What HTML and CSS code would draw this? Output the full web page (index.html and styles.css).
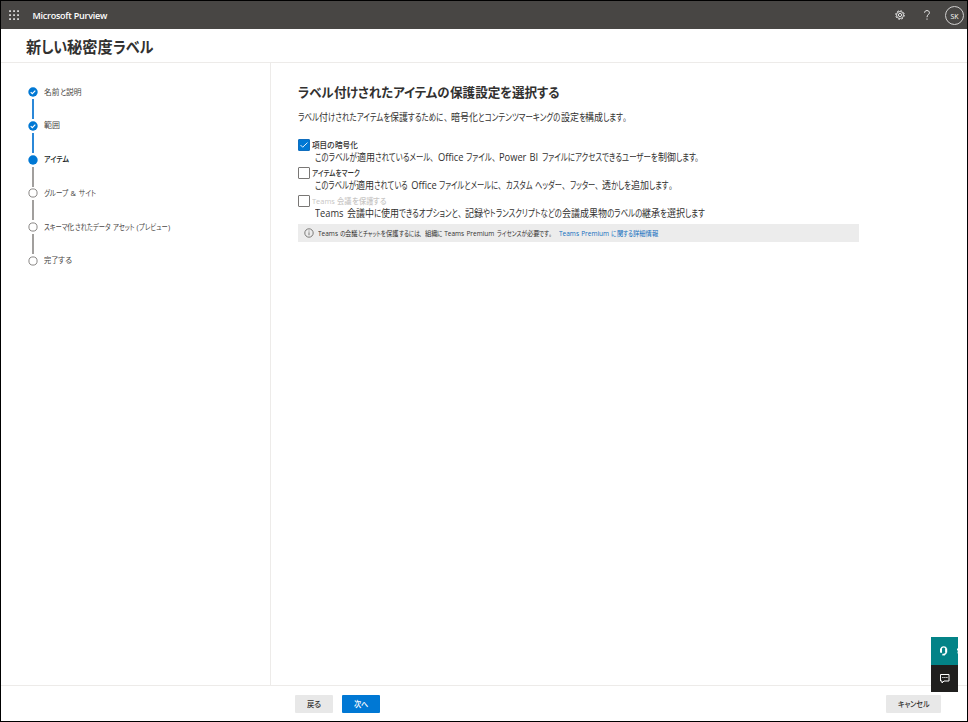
FILE: index.html
```html
<!DOCTYPE html>
<html lang="ja">
<head>
<meta charset="utf-8">
<title>Microsoft Purview</title>
<link rel="stylesheet" href="styles.css">
</head>
<body>
<div class="app">
  <header class="topbar">
    <svg class="waffle" width="10" height="10" viewBox="0 0 10 10" fill="#e4e4e4"><path d="M.2.2h1.700v1.700H.2zM4.200.2h1.700v1.700H4.200zM8.200.2h1.700v1.700H8.200zM.2 4.200h1.700v1.700H.2zM4.200 4.200h1.700v1.700H4.200zM8.200 4.200h1.700v1.700H8.200zM.2 8.200h1.700v1.700H.2zM4.200 8.200h1.700v1.700H4.200zM8.200 8.200h1.700v1.700H8.200z"/></svg>
    <span class="brand">Microsoft Purview</span>
    <svg class="gear" width="10" height="10" viewBox="0 0 10 10" fill="none" stroke="#e8e8e8"><circle cx="5" cy="5" r="3.500" stroke-width=".9"/><circle cx="5" cy="5" r="1.600" stroke-width="1"/><circle cx="5" cy="5" r="4.300" stroke-width="1" stroke-dasharray="1.690 1.690"/></svg>
    <svg class="help" width="6" height="10" viewBox="0 0 6 10" fill="none" stroke="#eee"><path d="M.6 2.700C.6 1.300 1.600.6 3 .6s2.400.8 2.400 2.100C5.400 4.500 3 4.600 3 7.200"/><path d="M3 8.500v1.200"/></svg>
    <span class="avatar">SK</span>
  </header>
  <div class="titlebar"><h1 data-fit="127.5" data-kanji="0.98">新しい秘密度ラベル</h1></div>
  <div class="body">
    <nav class="steps">
      <div class="step done"><svg class="dot" viewBox="0 0 10 10"><circle cx="5" cy="5" r="4.700" fill="#0078d4"/><path d="M2.700 5.200l1.600 1.500 3-3.100" fill="none" stroke="#fff" stroke-width="1.100"/></svg><span data-fit="37.5" data-kanji="0.97">名前と説明</span></div>
      <div class="step done"><svg class="dot" viewBox="0 0 10 10"><circle cx="5" cy="5" r="4.700" fill="#0078d4"/><path d="M2.700 5.200l1.600 1.500 3-3.100" fill="none" stroke="#fff" stroke-width="1.100"/></svg><span>範囲</span></div>
      <div class="step current"><svg class="dot" viewBox="0 0 10 10"><circle cx="5" cy="5" r="4.700" fill="#0078d4"/></svg><span data-fit="25">アイテム</span></div>
      <div class="step"><svg class="dot" viewBox="0 0 10 10"><circle cx="5" cy="5" r="4.100" fill="#fff" stroke="#8a8886"/></svg><span data-fit="51.5">グループ &amp; サイト</span></div>
      <div class="step"><svg class="dot" viewBox="0 0 10 10"><circle cx="5" cy="5" r="4.100" fill="#fff" stroke="#8a8886"/></svg><span data-fit="126">スキーマ化されたデータ アセット (プレビュー)</span></div>
      <div class="step"><svg class="dot" viewBox="0 0 10 10"><circle cx="5" cy="5" r="4.100" fill="#fff" stroke="#8a8886"/></svg><span data-fit="28.5">完了する</span></div>
    </nav>
    <main class="content">
      <h2 data-fit="262" data-kanji="0.97">ラベル付けされたアイテムの保護設定を選択する</h2>
      <p class="intro" data-fit="333">ラベル付けされたアイテムを保護するために、暗号化とコンテンツマーキングの設定を構成します。</p>
      <div class="option">
        <span class="box checked"><svg width="8" height="6" viewBox="0 0 8 6" fill="none" stroke="#fff" stroke-width=".9"><path d="M.5 3l2.200 2.200L7.500.6"/></svg></span>
        <div><div class="name" data-fit="45.5" data-kanji="0.95">項目の暗号化</div><div class="desc" data-fit="388">このラベルが適用されているメール、Office ファイル、Power BI ファイルにアクセスできるユーザーを制御します。</div></div>
      </div>
      <div class="option">
        <span class="box"></span>
        <div><div class="name" data-fit="48">アイテムをマーク</div><div class="desc" data-fit="361">このラベルが適用されている Office ファイルとメールに、カスタム ヘッダー、フッター、透かしを追加します。</div></div>
      </div>
      <div class="option">
        <span class="box"></span>
        <div><div class="name disabled" data-fit="74.5">Teams 会議を保護する</div><div class="desc" data-fit="390">Teams 会議中に使用できるオプションと、記録やトランスクリプトなどの会議成果物のラベルの継承を選択します</div></div>
      </div>
      <div class="notice">
        <svg width="10" height="10" viewBox="0 0 10 10" fill="none" stroke="#605e5c" stroke-width=".8"><circle cx="5" cy="5" r="4.200"/><path d="M5 4.300v3M5 2.600v.9"/></svg>
        <span data-fit="237">Teams の会議とチャットを保護するには、組織に Teams Premium ライセンスが必要です。</span>
        <a data-fit="99">Teams Premium に関する詳細情報</a>
      </div>
    </main>
  </div>
  <footer class="footer">
    <span class="btn back"><span data-fit="14.5">戻る</span></span><span class="btn next"><span data-fit="14.5">次へ</span></span><span class="btn cancel"><span data-fit="31.5">キャンセル</span></span>
  </footer>
  <div class="float">
    <div class="support"><svg width="27" height="28" viewBox="0 0 27 28" fill="none" stroke="#fff"><path d="M10.200 15.800v-3.500a2.500 2.500 0 0 1 5 0v2.700q0 2-2.300 2.500" stroke-width="1.300"/><path d="M10 11.600v4M15.200 11.600v4" stroke-width="2"/><path d="M11.300 17.600h2.600" stroke-width="1.700"/><path d="M26.500 11.500v2M27 14.500v2"/></svg></div>
    <div class="feedback"><svg width="27" height="27" viewBox="0 0 27 27" fill="none" stroke="#fff"><path d="M9.500 9.500h8.500v6.500h-5l-2 2v-2h-1.500z"/><path d="M11.300 12.500h1.200M13.300 12.500h1.200M15.300 12.500h1.200" stroke-width="1.200"/></svg></div>
  </div>
</div>
<script src="fit.js"></script>
</body>
</html>
```
FILE: fit.js
```js
// Condenses the kana of each label so the line takes its data-fit width;
// kanji and Latin text are narrowed by fixed factors.
const LATIN_SCALE = 0.93;
const KANJI_SCALE = 0.9;
const RUNS = /[、。]+|[\u3041-\u30ff]+|[\u4e00-\u9fff]+|[\u0020-\u007e]+/g;

function kindOf(run) {
  if (/[、。]/.test(run)) return 'punct';
  if (/[\u3041-\u30ff]/.test(run)) return 'kana';
  return /[\u4e00-\u9fff]/.test(run) ? 'kanji' : 'latin';
}

document.querySelectorAll('[data-fit]').forEach((el) => {
  const fixedScale = { latin: LATIN_SCALE, kanji: Number(el.dataset.kanji || KANJI_SCALE) };
  const runs = el.textContent.match(RUNS).map((text) => {
    const outer = document.createElement('span');
    const inner = document.createElement('span');
    const kind = kindOf(text);
    outer.className = 'run';
    inner.className = 'glyphs ' + kind;
    inner.textContent = text;
    outer.append(inner);
    return { outer, inner, kind };
  });
  el.replaceChildren(...runs.map((r) => r.outer));
  let fixed = 0;
  let flexible = 0;
  runs.forEach((r) => {
    r.width = r.inner.getBoundingClientRect().width;
    if (fixedScale[r.kind]) fixed += r.width * fixedScale[r.kind];
    else flexible += r.width;
  });
  const kanaScale = (Number(el.dataset.fit) - fixed) / flexible;
  runs.forEach((r) => {
    const scale = fixedScale[r.kind] || kanaScale;
    r.outer.style.width = r.width * scale + 'px';
    r.inner.style.transform = 'scaleX(' + scale + ')';
  });
});
```
FILE: styles.css
```css
* { box-sizing: border-box; }
body {
  margin: 0;
  font-family: "Open Sans", "Noto Sans CJK JP", sans-serif;
  font-feature-settings: "palt";
  color: #323130;
}
h1, h2, p { margin: 0; }
.run { display: inline-block; white-space: pre; }
.glyphs { display: inline-block; transform-origin: 0 50%; }
.latin { word-spacing: 0.08em; }
.punct { font-feature-settings: normal; }
.app {
  position: relative;
  display: flex;
  flex-direction: column;
  width: 968px;
  height: 722px;
  border: 1px solid #000;
  background: #fff;
  overflow: hidden;
  white-space: nowrap;
}
.topbar {
  display: flex;
  align-items: center;
  height: 28px;
  padding: 0 3px 0 8px;
  background: #484644;
  color: #fff;
}
.brand { margin: 1px auto 0 13.500px; font-size: 9px; font-weight: 600; letter-spacing: -0.24px; }
.gear { margin-right: 19px; }
.help { margin-right: 15px; }
.avatar {
  width: 19px;
  height: 19px;
  border: 1px solid #d0cfce;
  border-radius: 50%;
  font-size: 7px;
  line-height: 19px;
  text-align: center;
}
.titlebar { height: 34px; padding-left: 25px; border-bottom: 1px solid #edebe9; }
h1 { font-size: 15.500px; line-height: 37px; font-weight: 700; }
.body { display: flex; height: 622px; }
.steps { width: 270px; padding: 23px 0 0 27px; border-right: 1px solid #edebe9; }
.step {
  position: relative;
  display: flex;
  align-items: center;
  height: 12px;
  margin-bottom: 21.800px;
  font-size: 8px;
  line-height: 12px;
  color: #484644;
}
.step > span { margin-top: -1px; }
.dot { width: 10px; height: 10px; margin-right: 6px; }
.step:not(:last-child)::after {
  content: "";
  position: absolute;
  left: 4px;
  top: 13px;
  width: 1.500px;
  height: 20px;
  background: #a19f9d;
}
.step.done::after { background: #2b88d8; }
.step.current { color: #201f1e; font-weight: 500; }
.content { flex: 1; padding: 20px 0 0 27px; }
h2 { height: 19px; font-size: 13px; line-height: 18px; font-weight: 600; }
.intro { height: 16px; margin: 7px 0 13px; font-size: 10px; line-height: 16px; }
.option { display: flex; height: 28.200px; }
.box {
  display: flex;
  align-items: center;
  justify-content: center;
  width: 12px;
  height: 12px;
  margin: 1px 2px 0 0;
  border: 1px solid #797775;
  border-radius: 1px;
}
.box.checked { background: #0078d4; border-color: #106ebe; }
.name { height: 13px; font-size: 8px; line-height: 14px; font-weight: 500; }
.name.disabled { color: #c8c6c4; }
.desc { height: 12px; padding-left: 3px; font-size: 10px; line-height: 12px; }
.notice {
  display: flex;
  align-items: center;
  width: 561px;
  height: 18px;
  margin-top: 1px;
  padding-left: 6px;
  background: #ececec;
  font-size: 7px;
}
.notice svg { margin-right: 4px; }
.notice a { margin-left: 4px; color: #106ebe; }
.footer {
  display: flex;
  height: 36px;
  padding: 9px 26px 0 294px;
  border-top: 1px solid #edebe9;
}
.btn {
  width: 38px;
  height: 18px;
  border-radius: 1px;
  background: #e8e8e8;
  font-size: 8px;
  font-weight: 500;
  line-height: 18px;
  text-align: center;
}
.btn .run { text-align: left; }
.next { margin-left: 9px; background: #0078d4; color: #fff; }
.cancel { width: 55px; margin-left: auto; }
.float { position: absolute; left: 930px; top: 636px; width: 27px; }
.float svg { display: block; }
.support { height: 28px; background: #038387; }
.feedback { height: 27px; background: #201f1e; }
```
